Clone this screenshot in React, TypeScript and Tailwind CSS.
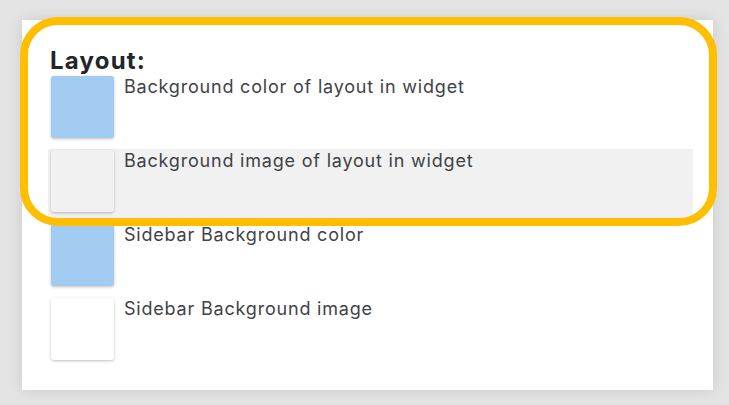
import React from "react";

const rows = [
  { label: "Background color of layout in widget", color: "bg-[#a2cbf2]", hl: false },
  { label: "Background image of layout in widget", color: "bg-[#f1f1f1]", hl: true },
  { label: "Sidebar Background color", color: "bg-[#a2cbf2]", hl: false },
  { label: "Sidebar Background image", color: "bg-white", hl: false },
];

export default function App() {
  return (
    <div className="w-[729px] h-[405px] bg-[#e4e4e4] pt-[20px] pl-[22px] relative" style={{ fontFamily: "Inter, 'Noto Sans', sans-serif" }}>
      <div className="w-[691px] h-[370px] bg-white shadow-[0_0_14px_rgba(0,0,0,0.12)] pt-[27px] pl-[26px]">
        <div className="text-[24px] leading-[28px] font-bold tracking-[1.2px] text-[#222529] pl-[2px]">Layout:</div>
        <div className="flex flex-col">
          {rows.map((r, i) => (
            <div key={i} className={`flex w-[645px] h-[74px] pt-[1px] ${r.hl ? "bg-[#f1f1f1]" : ""}`}>
              <div className={`ml-[3px] w-[63px] h-[62px] rounded-[3px] ${r.color} shadow-[0_1px_3px_rgba(0,0,0,0.25)]`} />
              <div className="ml-[10px] text-[18px] leading-[22px] tracking-[0.8px] text-[#3f4247]">{r.label}</div>
            </div>
          ))}
        </div>
      </div>
      <div className="absolute left-[20px] top-[17px] w-[697px] h-[209px] rounded-[38px] border-[8px] border-[#ffbf00]" />
    </div>
  );
}
